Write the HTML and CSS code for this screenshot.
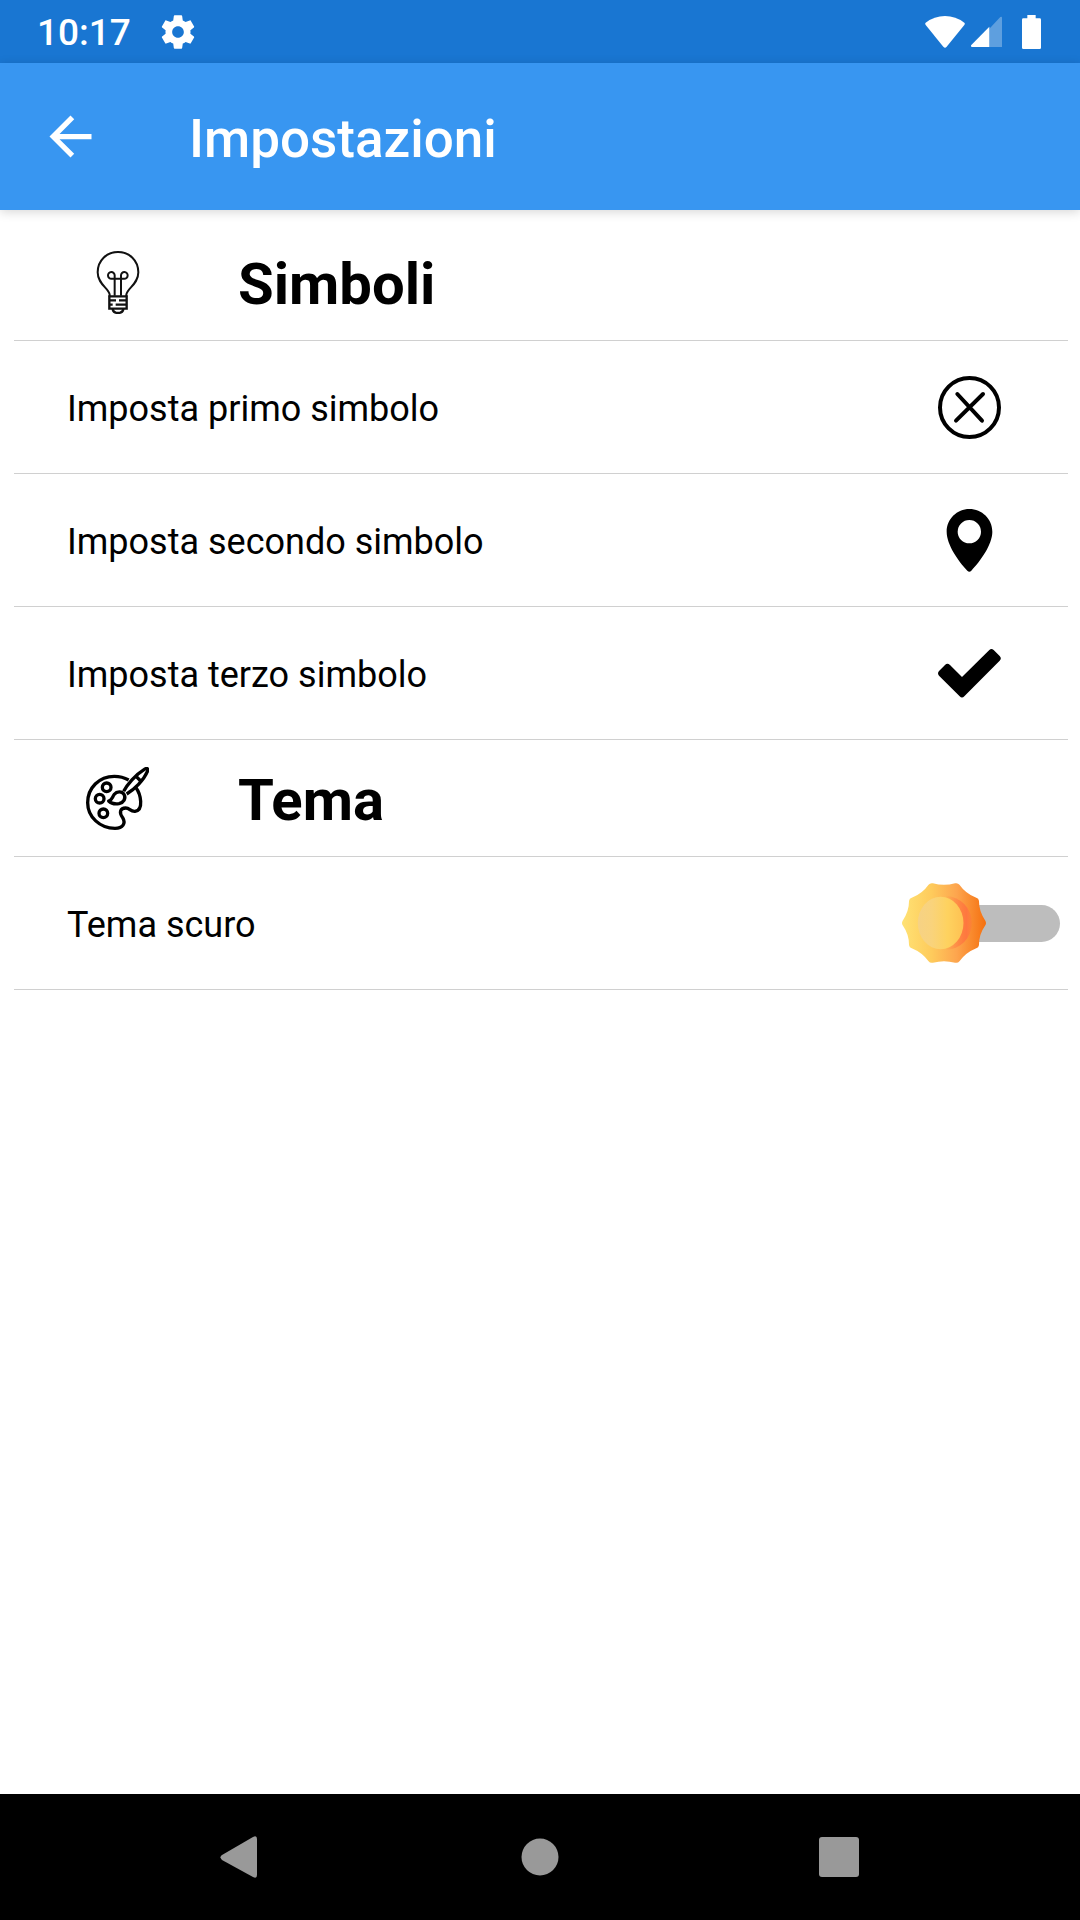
FILE: index.html
```html
<!DOCTYPE html>
<html lang="it">
<head>
<meta charset="utf-8">
<meta name="viewport" content="width=device-width, initial-scale=1">
<title>Impostazioni</title>
<link rel="stylesheet" href="styles.css">
</head>
<body class="screen">
  <div class="status">
    <span class="clock">10:17</span>
    <svg class="gear" viewBox="0 0 24 24" aria-hidden="true"><path d="M19.43 12.98c.04-.32.07-.64.07-.98s-.03-.66-.07-.98l2.11-1.65c.19-.15.24-.42.12-.64l-2-3.46c-.12-.22-.39-.3-.61-.22l-2.49 1c-.52-.4-1.08-.73-1.69-.98l-.38-2.65C14.46 2.18 14.25 2 14 2h-4c-.25 0-.46.18-.49.42l-.38 2.65c-.61.25-1.17.59-1.69.98l-2.49-1c-.23-.09-.49 0-.61.22l-2 3.46c-.13.22-.07.49.12.64l2.11 1.65c-.04.32-.07.65-.07.98s.03.66.07.98l-2.11 1.65c-.19.15-.24.42-.12.64l2 3.46c.12.22.39.3.61.22l2.49-1c.52.4 1.08.73 1.69.98l.38 2.65c.03.24.24.42.49.42h4c.25 0 .46-.18.49-.42l.38-2.65c.61-.25 1.17-.59 1.69-.98l2.49 1c.23.09.49 0 .61-.22l2-3.46c.12-.22.07-.49-.12-.64l-2.11-1.65zM12 15.5c-1.93 0-3.5-1.57-3.5-3.5s1.57-3.5 3.5-3.5 3.5 1.57 3.5 3.5-1.57 3.5-3.5 3.5z"/></svg>
    <svg class="wifi" viewBox="0 0 120 96" aria-hidden="true"><path d="M2 20Q28 0 60 0T118 20Q121 23 118 27L65 92Q60 98 55 92L2 27Q-1 23 2 20Z"/></svg>
    <svg class="signal" viewBox="0 0 93 93" aria-hidden="true"><path opacity=".3" d="M55 38L88 3Q93 0 93 5V93H55Z"/><path d="M55 32V93H3Q-2 91 1 87Z"/></svg>
    <svg class="battery" viewBox="0 0 57 102" aria-hidden="true"><path d="M16 0H41V10H53Q57 10 57 14V98Q57 102 53 102H4Q0 102 0 98V14Q0 10 4 10H16Z"/></svg>
  </div>

  <header class="appbar">
    <button class="back" type="button" aria-label="Indietro">
      <svg class="icon" viewBox="0 0 24 24"><path fill="#fff" d="M20 11H7.83l5.59-5.59L12 4l-8 8 8 8 1.41-1.41L7.83 13H20v-2z"/></svg>
    </button>
    <h1 class="title">Impostazioni</h1>
  </header>

  <main class="content">
    <section>
      <h2 class="heading">
        <svg class="icon" viewBox="18 33 189 189" fill="none" stroke="#111" stroke-width="6" aria-hidden="true">
          <path d="M89 170V164C87 145 53 133 53 97C53 61 80 36 114 36S175 61 175 97C175 133 141 145 139 164V170"/>
          <path d="M104 167V116M123 167V116M104 116H95A10 10 0 1 1 104 106V116H123V106A10 10 0 1 1 132 116H123"/>
          <path d="M88 169H140V206H88ZM89 181H108M117 181H139M89 194H98M107 194H139M98 208Q101 219 114 219T130 208" stroke-width="7"/>
        </svg>
        <span class="label">Simboli</span>
      </h2>
      <button class="row" type="button">
        <span class="label">Imposta primo simbolo</span>
        <svg class="icon" viewBox="114 78 189 189" fill="none" stroke="#000" stroke-width="12" stroke-linecap="round" aria-hidden="true"><circle cx="208.5" cy="172.5" r="88.5"/><path d="M172 132L246 212M249 132L168 212"/></svg>
      </button>
      <button class="row" type="button">
        <span class="label">Imposta secondo simbolo</span>
        <svg class="icon" viewBox="114 477 189 189" aria-hidden="true"><path fill-rule="evenodd" d="M208 477C246 477 277 507 277 545C277 584 241 633 214 662Q208 668 202 662C175 633 140 584 140 545C140 507 171 477 208 477ZM208 510A35 35 0 1 0 208 580A35 35 0 1 0 208 510Z"/></svg>
      </button>
      <button class="row" type="button">
        <span class="label">Imposta terzo simbolo</span>
        <svg class="icon" viewBox="114 876 189 189" aria-hidden="true"><path d="M186 981L268 900Q274 894 281 900L299 918Q306 925 299 932L193 1039Q186 1046 179 1039L117 977Q111 970 117 963L135 945Q142 938 150 945Z"/></svg>
      </button>
    </section>

    <section>
      <h2 class="heading">
        <svg class="icon" viewBox="48 51 189 189" fill="none" stroke="#000" stroke-width="10" stroke-linejoin="round" aria-hidden="true">
          <path d="M176 90C160 81 147 79 133 79C87 79 53 114 53 158C53 201 90 235 135 235C159 235 168 220 158 203C146 187 151 174 167 174C180 174 180 185 195 184C209 182 213 170 212 154C211 138 207 125 198 113"/>
          <circle cx="110" cy="112" r="13"/><circle cx="89" cy="146" r="13"/><circle cx="100" cy="190" r="13"/>
          <path d="M161 124C172 103 196 75 222 59C232 52 235 55 232 65C221 91 193 118 170 132M199 80L212 93"/>
          <path d="M116 153C127 150 126 142 133 133C141 123 156 124 162 133C169 145 161 158 147 161C134 163 123 160 116 153Z"/>
        </svg>
        <span class="label">Tema</span>
      </h2>
      <label class="row row-switch">
        <span class="label">Tema scuro</span>
        <span class="switch">
          <input class="track" type="checkbox" role="switch">
          <svg class="sun" viewBox="0 0 250 250" aria-hidden="true">
            <defs>
              <linearGradient id="rays"><stop offset="0" stop-color="#ffe274"/><stop offset=".35" stop-color="#fecb5c"/><stop offset=".65" stop-color="#fda54e"/><stop offset="1" stop-color="#f5700f"/></linearGradient>
              <linearGradient id="disc"><stop offset="0" stop-color="#f6d285"/><stop offset=".3" stop-color="#f9d37c"/><stop offset=".65" stop-color="#fed25f"/><stop offset="1" stop-color="#fec152"/></linearGradient>
              <linearGradient id="glow"><stop offset=".5" stop-color="#ff7440" stop-opacity="0"/><stop offset=".9" stop-color="#ff7440" stop-opacity=".9"/><stop offset="1" stop-color="#ff7440" stop-opacity=".3"/></linearGradient>
            </defs>
            <path fill="url(#rays)" d="M248 132Q229 159 229 191Q228 198 221 200Q189 213 171 239Q166 245 158 243Q125 234 92 243Q84 245 79 239Q61 213 29 200Q22 198 21 191Q21 159 2 132Q-2 125 2 118Q21 91 21 59Q22 52 29 50Q61 37 79 11Q84 5 92 7Q125 16 158 7Q166 5 171 11Q189 37 221 50Q228 52 229 59Q229 91 248 118Q252 125 248 132Z"/>
            <ellipse cx="130" cy="125" rx="78" ry="80" fill="url(#glow)"/>
            <ellipse cx="115" cy="125" rx="68" ry="78" fill="url(#disc)"/>
          </svg>
        </span>
      </label>
    </section>
  </main>

  <nav class="navbar">
    <button class="key" type="button" aria-label="Indietro"><svg class="glyph" viewBox="0 0 42 42"><path d="M2 19L33 1Q37 -1 37 3V39Q37 43 33 41L2 24Q-1 21 2 19Z"/></svg></button>
    <button class="key" type="button" aria-label="Home"><svg class="glyph" viewBox="0 0 42 42"><circle cx="21" cy="21" r="18.5"/></svg></button>
    <button class="key" type="button" aria-label="Recenti"><svg class="glyph" viewBox="0 0 42 42"><rect x="1" y="1" width="40" height="40" rx="3"/></svg></button>
  </nav>
</body>
</html>
```
FILE: styles.css
```css
* {
  box-sizing: border-box;
}

.screen {
  display: flex;
  flex-direction: column;
  min-height: 100vh;
  margin: 0;
  background: #fff;
  color: #000;
  font-family: Roboto, "Noto Sans", sans-serif;
  font-size: 36px;
  line-height: 44px;
}

button {
  padding: 0;
  border: 0;
  background: none;
  color: inherit;
  font: inherit;
  text-align: left;
}

svg {
  display: block;
  flex: none;
}

.icon {
  width: 63px;
  height: 63px;
}

/* Status bar */
.status {
  display: flex;
  align-items: center;
  height: 63px;
  padding: 0 39px 0 37px;
  background: #1976d2;
  color: #fff;
  fill: #fff;
}

.clock {
  padding-top: 2px;
  font-size: 37px;
  font-weight: 500;
}

.gear {
  width: 40px;
  height: 40px;
  margin-left: 27px;
}

.wifi {
  width: 40px;
  height: 32px;
  margin-left: auto;
}

.signal {
  width: 31px;
  height: 31px;
  margin-left: 6px;
}

.battery {
  width: 19px;
  height: 34px;
  margin-left: 20px;
}

/* App bar */
.appbar {
  display: flex;
  align-items: center;
  gap: 87px;
  height: 147px;
  padding: 0 39px;
  background: #3896f1;
  color: #fff;
  box-shadow: 0 2px 10px rgba(0, 0, 0, 0.16);
}

.title {
  margin: 0;
  padding-top: 4px;
  font-size: 53px;
  font-weight: 500;
  line-height: 62px;
}

/* Settings list */
.content {
  flex: 1;
  padding: 14px 12px 0 14px;
}

.label {
  padding-top: 4px;
}

.heading {
  display: flex;
  align-items: center;
  gap: 89px;
  height: 117px;
  margin: 0;
  padding: 0 72px;
  border-bottom: 1px solid #d0d0d0;
  font-size: 58px;
  font-weight: 700;
  line-height: 68px;
}

.row {
  display: flex;
  align-items: center;
  justify-content: space-between;
  width: 100%;
  height: 133px;
  padding: 0 67px 0 53px;
  border-bottom: 1px solid #d0d0d0;
}

.row-switch {
  padding-right: 8px;
}

/* Both layers share one grid cell, the sun on top of the track */
.switch {
  display: grid;
  align-items: center;
  width: 158px;
}

.track {
  grid-area: 1 / 1;
  appearance: none;
  height: 37px;
  margin: 0 0 0 12px;
  border-radius: 19px;
  background: #bdbdbd;
}

.sun {
  grid-area: 1 / 1;
  z-index: 1;
  width: 84px;
  height: 84px;
}

/* System navigation */
.navbar {
  display: flex;
  justify-content: center;
  height: 126px;
  background: #000;
}

.key {
  display: grid;
  place-items: center;
  width: 299px;
}

.glyph {
  width: 42px;
  height: 42px;
  fill: #999;
}
```
